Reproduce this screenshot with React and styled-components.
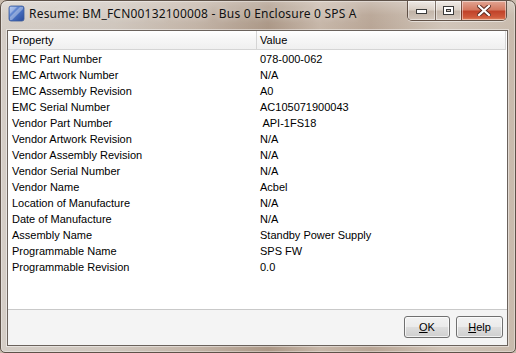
import React from "react";
import styled, { createGlobalStyle } from "styled-components";

const Global = createGlobalStyle`
  html, body { margin: 0; padding: 0; background: #c9bbad; }
  body { width: 516px; height: 353px; overflow: hidden; }
`;

const Window = styled.div`
  width: 516px;
  height: 353px;
  box-sizing: border-box;
  display: flex;
  flex-direction: column;
  padding: 0 7px 6px 6px;
  border: 1px solid #5e5249;
  border-radius: 7px 7px 5px 5px;
  background:
    linear-gradient(180deg, rgba(255,255,255,0.3) 0px, rgba(255,255,255,0.05) 14px, rgba(0,0,0,0) 30px),
    linear-gradient(90deg, #d4cdc6 0%, #cfc6bd 22%, #c2b3a6 38%, #ab9786 52%, #c6b6a8 62%, #b8a595 72%, #d0c4b8 86%, #c8baac 100%);
  font-family: "Liberation Sans", Arial, sans-serif;
  box-shadow: inset 0 0 0 1px rgba(255,255,255,0.35);
`;

const TitleBar = styled.div`
  height: 29px;
  flex: none;
  display: flex;
  align-items: flex-start;
`;

const AppIcon = styled.svg`
  width: 17px;
  height: 17px;
  margin: 4px 0 0 1px;
  flex: none;
`;

const Title = styled.div`
  margin: 5px 0 0 4px;
  font-family: "Noto Sans", "Open Sans", sans-serif;
  font-size: 12px;
  letter-spacing: 0.2px;
  line-height: 16px;
  color: #111;
  white-space: nowrap;
  flex: 1;
  text-shadow: 0 0 6px rgba(255,255,255,0.7);
`;

const Captions = styled.div`
  display: flex;
  margin-right: 1px;
  height: 19px;
  border: 1px solid rgba(60, 45, 35, 0.75);
  border-top: none;
  border-radius: 0 0 5px 5px;
  overflow: hidden;
  box-shadow: 0 1px 0 rgba(255,255,255,0.5);
`;

const CapBtn = styled.div`
  width: ${(p) => p.$w}px;
  height: 100%;
  display: flex;
  align-items: center;
  justify-content: center;
  box-sizing: border-box;
  border-left: ${(p) => (p.$first ? "none" : "1px solid rgba(60,45,35,0.6)")};
  box-shadow: inset 0 0 0 1px rgba(255,255,255,0.45);
  background: ${(p) =>
    p.$close
      ? "linear-gradient(180deg, #e2a593 0%, #d47a62 45%, #c1432a 55%, #cf5a3c 85%, #e08660 100%)"
      : "linear-gradient(180deg, rgba(255,255,255,0.55) 0%, rgba(230,222,214,0.45) 45%, rgba(180,165,152,0.45) 55%, rgba(215,205,196,0.6) 100%)"};
`;

const Client = styled.div`
  flex: 1;
  display: flex;
  flex-direction: column;
  border: 1px solid #6a625c;
  box-shadow: 0 0 0 1px rgba(255,255,255,0.45);
  background: #f4f4f4;
  min-height: 0;
`;

const TableArea = styled.div`
  flex: 1;
  background: #ffffff;
  border-bottom: 1px solid #c9c9c9;
  display: flex;
  flex-direction: column;
  padding-right: 1px;
`;

const Header = styled.div`
  display: grid;
  grid-template-columns: 249px 1fr;
  height: 18px;
  border-bottom: 1px solid #d5d5d5;
  background: linear-gradient(180deg, #ffffff 0%, #f7f7f7 40%, #f0f0f0 100%);
`;

const HeadCell = styled.div`
  font-size: 11px;
  line-height: 18px;
  color: #000;
  padding-left: ${(p) => p.$pad}px;
  border-right: 1px solid #d5d5d5;
  white-space: nowrap;
`;

const Body = styled.div`
  padding-top: 1px;
`;

const Row = styled.div`
  display: grid;
  grid-template-columns: 249px 1fr;
  height: 16px;
`;

const Cell = styled.div`
  font-size: 11px;
  line-height: 16px;
  color: #000;
  padding-left: ${(p) => p.$pad}px;
  white-space: pre;
`;

const ButtonBar = styled.div`
  height: 35px;
  flex: none;
  display: flex;
  justify-content: flex-end;
  align-items: flex-start;
  gap: 6px;
  padding: 6px 4px 0 0;
  box-sizing: border-box;
`;

const Button = styled.div`
  width: ${(p) => p.$w}px;
  height: 22px;
  box-sizing: border-box;
  border: 1px solid #707070;
  border-radius: 3px;
  background: linear-gradient(180deg, #f2f2f2 0%, #ebebeb 48%, #dddddd 52%, #cfcfcf 100%);
  box-shadow: inset 0 0 0 1px rgba(255,255,255,0.7);
  display: flex;
  align-items: center;
  justify-content: center;
  font-size: 11px;
  color: #000;
`;

const U = styled.span`
  text-decoration: underline;
`;

const rows = [
  ["EMC Part Number", "078-000-062"],
  ["EMC Artwork Number", "N/A"],
  ["EMC Assembly Revision", "A0"],
  ["EMC Serial Number", "AC105071900043"],
  ["Vendor Part Number", " API-1FS18"],
  ["Vendor Artwork Revision", "N/A"],
  ["Vendor Assembly Revision", "N/A"],
  ["Vendor Serial Number", "N/A"],
  ["Vendor Name", "Acbel"],
  ["Location of Manufacture", "N/A"],
  ["Date of Manufacture", "N/A"],
  ["Assembly Name", "Standby Power Supply"],
  ["Programmable Name", "SPS FW"],
  ["Programmable Revision", "0.0"],
];

export default function App() {
  return (
    <>
      <Global />
      <Window>
        <TitleBar>
          <AppIcon viewBox="0 0 17 17">
            <defs>
              <linearGradient id="ig" x1="0" y1="0" x2="1" y2="1">
                <stop offset="0" stopColor="#9bb8ee" />
                <stop offset="0.5" stopColor="#4a72c4" />
                <stop offset="1" stopColor="#2a4a9a" />
              </linearGradient>
            </defs>
            <rect x="1" y="1" width="15" height="15" rx="2" fill="url(#ig)" stroke="#3a5a9a" strokeWidth="0.8" />
            <path d="M2 12 L12 2 L15 2 L15 4 L4 15 L2 15 Z" fill="#ffffff" opacity="0.35" />
            <path d="M2 2 L9 2 L2 9 Z" fill="#ffffff" opacity="0.3" />
          </AppIcon>
          <Title>Resume: BM_FCN00132100008 - Bus 0 Enclosure 0 SPS A</Title>
          <Captions>
            <CapBtn $w={27} $first>
              <svg width="11" height="6" viewBox="0 0 11 6">
                <rect x="0.5" y="1.5" width="10" height="4" fill="#fff" stroke="#3a3a3a" strokeWidth="1" />
              </svg>
            </CapBtn>
            <CapBtn $w={26}>
              <svg width="11" height="9" viewBox="0 0 11 9">
                <rect x="0.5" y="0.5" width="10" height="8" fill="none" stroke="#3a3a3a" strokeWidth="1" />
                <rect x="2" y="2" width="7" height="5" fill="none" stroke="#fff" strokeWidth="2" />
                <rect x="3.5" y="3.5" width="4" height="2" fill="none" stroke="#3a3a3a" strokeWidth="1" />
              </svg>
            </CapBtn>
            <CapBtn $w={45} $close>
              <svg width="14" height="11" viewBox="0 0 14 11">
                <path d="M2 1 L12 10 M12 1 L2 10" stroke="#5a2a20" strokeWidth="4" strokeLinecap="square" />
                <path d="M2 1 L12 10 M12 1 L2 10" stroke="#ffffff" strokeWidth="2.2" strokeLinecap="square" />
              </svg>
            </CapBtn>
          </Captions>
        </TitleBar>
        <Client>
          <TableArea>
            <Header>
              <HeadCell $pad={4}>Property</HeadCell>
              <HeadCell $pad={3}>Value</HeadCell>
            </Header>
            <Body>
              {rows.map(([k, v]) => (
                <Row key={k}>
                  <Cell $pad={4}>{k}</Cell>
                  <Cell $pad={3}>{v}</Cell>
                </Row>
              ))}
            </Body>
          </TableArea>
          <ButtonBar>
            <Button $w={46}>
              <U>O</U>K
            </Button>
            <Button $w={47}>
              <U>H</U>elp
            </Button>
          </ButtonBar>
        </Client>
      </Window>
    </>
  );
}
